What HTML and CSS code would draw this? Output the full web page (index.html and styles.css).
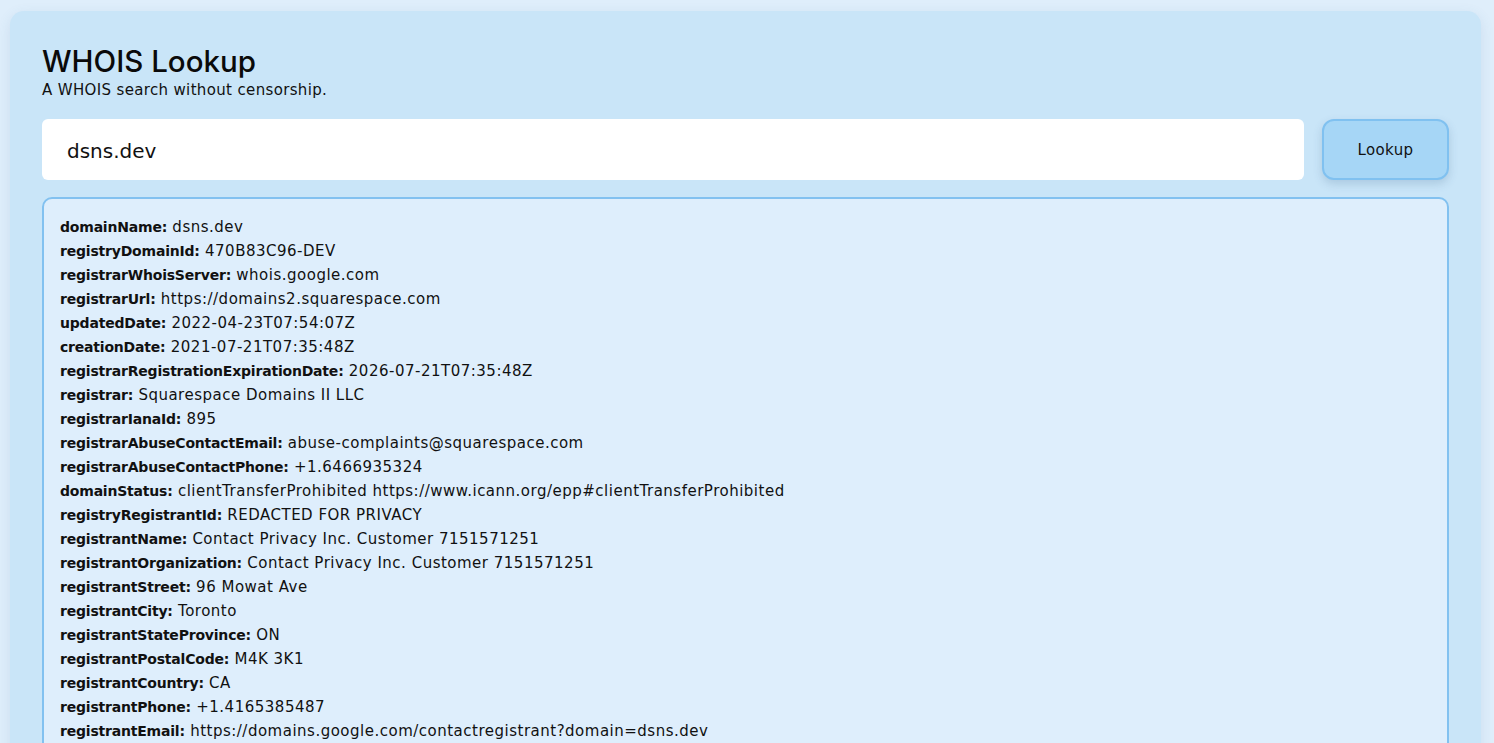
FILE: index.html
```html
<!DOCTYPE html>
<html lang="en">
<head>
<meta charset="utf-8">
<title>WHOIS Lookup</title>
<link rel="stylesheet" href="styles.css">
</head>
<body>
<main class="card">
  <header class="head">
    <h1 class="title">WHOIS Lookup</h1>
    <p class="subtitle">A WHOIS search without censorship.</p>
  </header>
  <form class="search">
    <input class="query" type="text" value="dsns.dev">
    <button class="lookup" type="button">Lookup</button>
  </form>
  <section class="result">
    <div class="row"><b>domainName:</b> dsns.dev</div>
    <div class="row"><b>registryDomainId:</b> 470B83C96-DEV</div>
    <div class="row"><b>registrarWhoisServer:</b> whois.google.com</div>
    <div class="row"><b>registrarUrl:</b> https://domains2.squarespace.com</div>
    <div class="row"><b>updatedDate:</b> 2022-04-23T07:54:07Z</div>
    <div class="row"><b>creationDate:</b> 2021-07-21T07:35:48Z</div>
    <div class="row"><b>registrarRegistrationExpirationDate:</b> 2026-07-21T07:35:48Z</div>
    <div class="row"><b>registrar:</b> Squarespace Domains II LLC</div>
    <div class="row"><b>registrarIanaId:</b> 895</div>
    <div class="row"><b>registrarAbuseContactEmail:</b> abuse-complaints@squarespace.com</div>
    <div class="row"><b>registrarAbuseContactPhone:</b> +1.6466935324</div>
    <div class="row"><b>domainStatus:</b> clientTransferProhibited https://www.icann.org/epp#clientTransferProhibited</div>
    <div class="row"><b>registryRegistrantId:</b> REDACTED FOR PRIVACY</div>
    <div class="row"><b>registrantName:</b> Contact Privacy Inc. Customer 7151571251</div>
    <div class="row"><b>registrantOrganization:</b> Contact Privacy Inc. Customer 7151571251</div>
    <div class="row"><b>registrantStreet:</b> 96 Mowat Ave</div>
    <div class="row"><b>registrantCity:</b> Toronto</div>
    <div class="row"><b>registrantStateProvince:</b> ON</div>
    <div class="row"><b>registrantPostalCode:</b> M4K 3K1</div>
    <div class="row"><b>registrantCountry:</b> CA</div>
    <div class="row"><b>registrantPhone:</b> +1.4165385487</div>
    <div class="row"><b>registrantEmail:</b> https://domains.google.com/contactregistrant?domain=dsns.dev</div>
  </section>
</main>
</body>
</html>
```
FILE: styles.css
```css
html, body {
  margin: 0;
  padding: 0;
  background: #dfeefb;
}
body {
  font-family: "DejaVu Sans", "Noto Sans", sans-serif;
  color: #111;
  padding: 11px 13px 0 10px;
}
.card {
  background: #c9e5f8;
  border-radius: 14px;
  padding: 30px 32px 24px 32px;
  box-shadow: 0 4px 14px rgba(60, 110, 150, 0.12);
}
.title {
  margin: 0;
  font-family: Inter, "DejaVu Sans", sans-serif;
  font-size: 29.5px;
  font-weight: 500;
  line-height: 40px;
  color: #0a0a0a;
}
.subtitle {
  margin: 0;
  font-size: 15px;
  line-height: 18px;
  letter-spacing: 0.35px;
  color: #111;
}
.search {
  display: flex;
  gap: 18px;
  margin-top: 20px;
}
.query {
  flex: 1;
  height: 61px;
  box-sizing: border-box;
  border: none;
  border-radius: 6px;
  background: #fff;
  padding: 2px 24px 0 25px;
  font-family: inherit;
  font-size: 20px;
  color: #111;
  outline: none;
}
.lookup {
  width: 127px;
  height: 61px;
  box-sizing: border-box;
  border: 2px solid #80c1f0;
  border-radius: 12px;
  background: #a6d6f6;
  font-family: inherit;
  font-size: 15px;
  letter-spacing: 0.4px;
  color: #111;
  box-shadow: 0 4px 10px rgba(50, 90, 130, 0.2);
}
.result {
  margin-top: 17px;
  background: #deeefc;
  border: 2px solid #82c1f0;
  border-radius: 10px;
  padding: 16px 16px 40px;
  font-size: 15px;
  letter-spacing: 0.5px;
  line-height: 24px;
  color: #111;
}
.row b {
  font-size: 14px;
  font-weight: 600;
  letter-spacing: -0.2px;
}
```
